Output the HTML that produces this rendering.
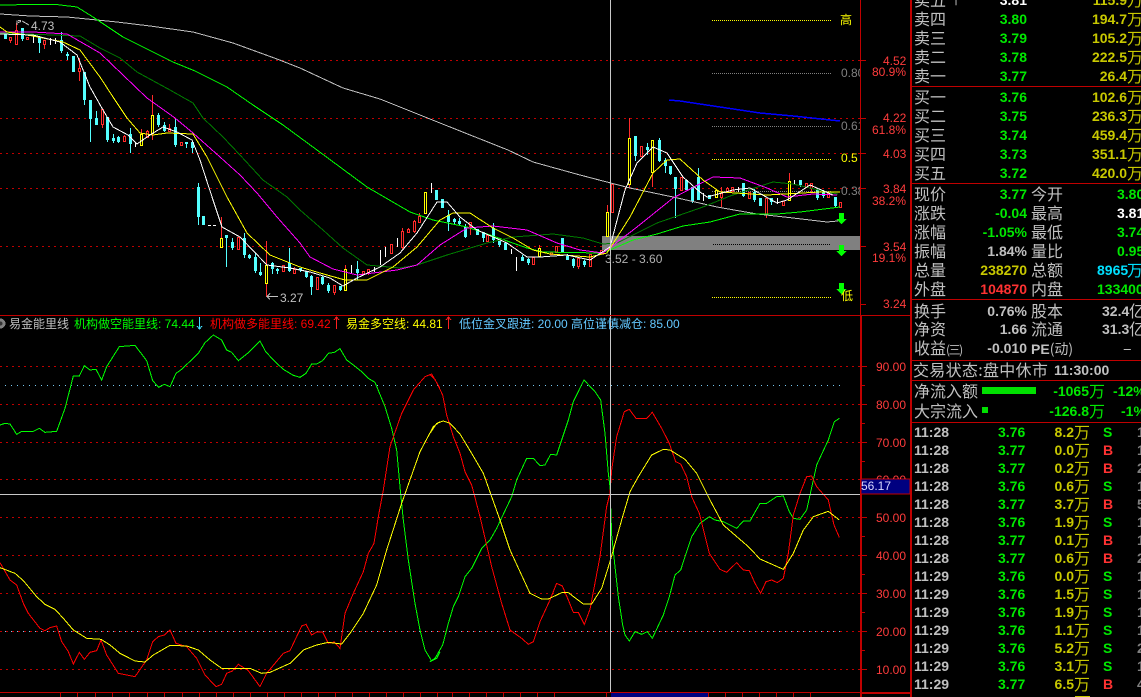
<!DOCTYPE html>
<html lang="zh"><head><meta charset="utf-8"><title>K线图</title>
<style>
html,body{margin:0;padding:0;background:#000;width:1141px;height:697px;overflow:hidden}
#r{position:relative;width:1141px;height:697px;overflow:hidden;background:#000;font-family:"Liberation Sans","WenQuanYi Zen Hei",sans-serif}
svg{position:absolute;left:0;top:0}
.t{position:absolute;white-space:pre;line-height:16px;height:16px}
.l{font:16px/16px "WenQuanYi Zen Hei","Noto Sans CJK SC",sans-serif;color:#c0c0c0;margin-top:-1px}
.n{font:bold 14px/16px "Liberation Sans",sans-serif}
.s{font:12px/14px "Liberation Sans","WenQuanYi Zen Hei",sans-serif;height:14px}
.g{color:#00e800}.y{color:#c8c800}.w{color:#c0c0c0}.r{color:#ff3232}.c{color:#00e0ff}.d{color:#808080}
</style></head><body><div id="r">
<svg width="1141" height="697" viewBox="0 0 1141 697" shape-rendering="crispEdges" fill="none">
<!-- grids -->
<g stroke="#c00000" stroke-dasharray="2 4">
<path d="M0 60.5H860M0 118.5H860M0 153.5H860M0 188.5H860M0 246.5H860"/>
<path d="M0 366.5H860M0 404.5H860M0 442.5H860M0 479.5H860M0 517.5H860M0 555.5H860M0 593.5H860M0 631.5H860M0 669.5H860"/>
</g>
<path d="M5 385.5H842M5 631.5H842" stroke="#78c8f0" stroke-dasharray="1 5"/>
<!-- band -->
<rect x="602" y="236" width="258" height="14" fill="#808080"/>
<!-- fib lines -->
<g stroke-dasharray="1 1">
<path d="M712 20.5H831M712 159.5H831M712 297.5H831" stroke="#ffff00"/>
<path d="M712 73.5H831M712 126.5H831M712 191.5H831" stroke="#808080"/>
<path d="M713 244.5H830" stroke="#000"/>
</g>
<!-- cyan candles -->
<path stroke="#54ffff" d="M5.5 33V39M22.5 28V41M39.5 36V53M61.5 32V53M67.5 52V60M84.5 72V105M90.5 100V142M96.5 111V125M107.5 117V142M113.5 134V143M118.5 136V143M130.5 128V153M158.5 113V127M164.5 122V132M175.5 118V147M186.5 142V148M192.5 142V153M198.5 183V225M226.5 235V267M232.5 238V250M244.5 233V258M249.5 254V259M255.5 253V273M260.5 263V276M272.5 262V274M277.5 268V274M289.5 248V272M300.5 268V272M306.5 271V278M311.5 275V295M322.5 276V285M328.5 283V293M340.5 286V291M357.5 261V280M448.5 210V231M454.5 218V224M459.5 218V226M465.5 224V238M483.5 232V242M493.5 223V243M499.5 241V247M522.5 255V261M528.5 258V265M562.5 238V253M567.5 254V260M573.5 258V268M584.5 260V267M635.5 136V161M647.5 143V155M659.5 138V162M665.5 158V173M670.5 166V175M675.5 177V218M692.5 187V203M698.5 168V200M743.5 183V197M754.5 189V202M771.5 198V205M800.5 180V187M817.5 188V200M823.5 190V198M835.5 197V207"/>
<path stroke="#54ffff" stroke-width="3" d="M5.5 33V39M22.5 28V39M39.5 37V43M61.5 40V51M67.5 54V56M73.5 56V72M84.5 72V100M90.5 100V119M96.5 118V125M107.5 117V140M113.5 138V141M118.5 137V142M130.5 134V144M158.5 115V125M164.5 125V131M175.5 127V145M186.5 142V144M192.5 142V148M198.5 187V217M203.5 216V225M226.5 235V238M232.5 242V248M244.5 238V255M249.5 255V258M255.5 257V271M260.5 272V275M272.5 263V269M277.5 269V271M289.5 263V271M300.5 268V270M306.5 271V277M311.5 276V287M322.5 277V284M328.5 285V291M340.5 286V290M357.5 269V273M436.5 190V200M442.5 199V208M448.5 215V222M454.5 219V222M459.5 221V224M465.5 227V237M477.5 229V235M483.5 232V238M493.5 228V240M499.5 241V245M505.5 243V250M522.5 257V261M528.5 259V263M562.5 238V252M567.5 256V260M573.5 259V266M584.5 261V265M635.5 136V156M647.5 147V150M659.5 140V161M665.5 160V166M670.5 166V174M675.5 177V189M686.5 180V190M692.5 187V201M698.5 177V200M709.5 195V199M743.5 183V196M754.5 192V200M760.5 198V206M771.5 198V202M800.5 180V185M817.5 190V198M823.5 192V196M835.5 197V206"/>
<!-- red candles -->
<path stroke="#ff2a2a" d="M10.5 37V43M16.5 23V45M27.5 37V40M44.5 40V49M79.5 58V81M102.5 109V128M124.5 135V142M147.5 130V138M169.5 124V132M141.5 129V146M152.5 95V140M221.5 217V247M266.5 241V297M345.5 265V291M238.5 237V250M283.5 265V272M294.5 267V273M317.5 277V290M334.5 285V295M363.5 271V275M368.5 269V275M402.5 228V249M408.5 228V233M414.5 220V233M419.5 213V223M470.5 222V235M487.5 235V242M539.5 245V256M578.5 258V269M590.5 254V267M607.5 205V236M629.5 118V188M652.5 140V187M721.5 187V207M727.5 187V193M766.5 198V218M789.5 173V200M811.5 183V192"/>
<path stroke="#ff2a2a" fill="#000" d="M9.5 37.5h2v3h-2zM15.5 30.5h2v14h-2zM26.5 37.5h2v2h-2zM43.5 40.5h2v4h-2zM78.5 68.5h2v3h-2zM101.5 109.5h2v15h-2zM123.5 136.5h2v5h-2zM146.5 131.5h2v6h-2zM168.5 128.5h2v3h-2zM180.5 142.5h2v3h-2zM237.5 237.5h2v12h-2zM282.5 265.5h2v6h-2zM293.5 269.5h2v4h-2zM316.5 277.5h2v12h-2zM333.5 285.5h2v7h-2zM362.5 271.5h2v3h-2zM367.5 269.5h2v4h-2zM390.5 244.5h2v9h-2zM401.5 231.5h2v16h-2zM407.5 229.5h2v3h-2zM413.5 221.5h2v10h-2zM418.5 216.5h2v6h-2zM469.5 222.5h2v4h-2zM486.5 235.5h2v6h-2zM532.5 257.5h2v7h-2zM550.5 252.5h2v2h-2zM555.5 246.5h2v6h-2zM577.5 258.5h2v8h-2zM589.5 254.5h2v12h-2zM600.5 250.5h2v3h-2zM611.5 184.5h2v28h-2zM640.5 146.5h2v10h-2zM680.5 177.5h2v13h-2zM720.5 193.5h2v4h-2zM726.5 188.5h2v4h-2zM731.5 187.5h2v4h-2zM748.5 192.5h2v6h-2zM765.5 198.5h2v16h-2zM782.5 201.5h2v4h-2zM805.5 183.5h2v4h-2zM810.5 183.5h2v5h-2zM827.5 193.5h2v4h-2zM839.5 202.5h2v5h-2z"/>
<!-- yellow candles -->
<path stroke="#ffff00" fill="#000" d="M140.5 134.5h2v11h-2zM151.5 115.5h2v18h-2zM220.5 238.5h2v9h-2zM265.5 265.5h2v18h-2zM344.5 269.5h2v21h-2zM424.5 192.5h2v21h-2zM538.5 248.5h2v8h-2zM606.5 212.5h2v24h-2zM628.5 138.5h2v46h-2zM651.5 140.5h2v32h-2zM715.5 190.5h2v7h-2zM788.5 181.5h2v19h-2z"/>
<!-- white ticks -->
<path stroke="#fff" d="M33.5 36V43M50.5 38V45M55.5 38V44M135.5 142V147M208 225.5h3M213 225.5h3M351.5 265V273M374.5 267V272M380.5 250V265M385.5 247V257M397.5 238V247M431.5 183V193M511.5 249V254M516.5 257V271M703.5 193V201M738.5 187V192M777.5 198V204M794.5 180V185"/>
<!-- moving averages -->
<polyline stroke="#c0c0c0" points="0,14 30,16 67,17 117,22 150,26 193,32 233,43 277,59 300,68 343,88 380,99 445,125 508,150 533,162 580,175 603,181 630,188 673,197 717,207 757,214 793,218 827,222 838,221"/>
<polyline stroke="#00ff00" points="0,5 20,4.7 58,4.7 77,7 93,17 123,37 147,49 173,62 195,71 227,87 253,105 283,125 317,150 367,187 410,212 433,220 467,227 490,235 527,248 543,252 600,253 610,250 633,240 657,234 683,226 710,222 740,214 777,214 800,212 840,207"/>
<polyline stroke="#007a00" points="0,33 80,36 100,48 120,58 137,72 170,90 193,103 203,118 223,137 240,155 263,180 287,197 300,210 323,230 343,248 367,265 400,268 417,265 447,255 487,243 513,237 553,234 583,238 603,244 617,243 657,223 703,207 730,196 773,182 793,184 827,192 838,194"/>
<polyline stroke="#ff00ff" points="0,32 33,32 67,34 100,53 123,75 147,98 175,118 193,133 220,157 240,175 257,193 277,217 300,243 310,257 333,269 357,275 397,270 417,265 440,245 467,228 493,226 527,230 557,243 580,250 603,253 637,227 673,198 713,177 740,178 767,188 787,197 813,194 837,195"/>
<polyline stroke="#ffff00" points="0,27 7,32 33,36 63,42 80,50 100,77 113,97 127,118 140,133 153,135 167,133 193,134 207,157 227,197 247,233 270,255 300,267 320,273 345,280 367,280 393,267 417,247 440,220 453,213 470,213 493,228 513,238 533,250 550,254 590,257 607,253 630,217 653,173 667,160 680,159 703,180 720,192 767,195 820,192 840,192"/>
<polyline stroke="#fff" points="0,34 33,35 60,42 77,55 90,87 103,110 113,127 128,135 137,144 150,135 163,127 177,132 192,140 200,160 213,200 222,227 240,237 267,265 290,268 310,272 330,278 343,286 357,278 380,267 400,253 417,233 437,202 447,202 460,217 477,230 507,243 527,257 540,257 567,255 590,260 610,247 625,190 637,163 653,147 667,153 683,177 700,192 707,197 733,190 750,188 777,203 787,200 810,185 833,195"/>
<polyline stroke="#0000ff" stroke-width="1.5" points="669,100 680,101 760,113 793,116 840,121"/>
<!-- arrows -->
<path fill="#00ff00" d="M839 213h5v6h3l-5.500 5-5.500-5h3zM839 245h5v6h3l-5.500 5-5.500-5h3zM839 283h5v6h3l-5.500 5-5.500-5h3z"/>
<path stroke="#c0c0c0" d="M17 20.5V25M18 20.5h3M18 22.5l3-1M22 21l7 4"/>
<path stroke="#c0c0c0" d="M266.5 296.5H278M267 296.5l3-3M267 296.5l3 3"/>
<!-- lower indicators -->
<g transform="translate(0,340) scale(.33333)" stroke-width="3">
<polyline stroke="#00ff00" points="0,255 15,250 30,252 50,283 65,274 100,274 118,265 135,277 170,274 195,205 220,108 238,108 253,77 270,90 288,88 305,120 320,80 358,20 405,16 440,62 458,122 476,142 493,133 510,140 528,100 545,88 595,40 615,8 640,-15 665,0 680,30 695,37 715,62 745,38 780,3 797,35 825,65 850,88 880,106 900,112 918,100 935,72 950,72 968,62 985,40 1003,37 1020,26 1040,60 1060,75 1085,95 1105,115 1125,127 1155,200 1175,265 1190,330 1200,440 1210,540 1225,660 1245,790 1260,870 1275,930 1295,963 1310,955 1320,935"/>
<polyline stroke="#ff0000" points="0,668 30,720 50,735 70,790 85,820 120,865 135,872 150,863 170,858 185,905 205,935 220,972 238,937 253,958 270,937 290,932 303,900 320,945 355,1000 405,1010 440,960 458,905 475,890 493,885 510,870 528,910 560,920 590,955 615,1005 648,1040 665,1033 680,1000 697,993 715,973 745,992 780,1040 800,1000 850,940 870,932 905,858 918,853 935,885 950,876 968,876 985,910 1003,906 1020,925 1035,820 1060,760 1090,695 1105,640 1122,610 1135,530 1150,450 1170,320 1205,220 1240,150 1275,110 1295,102 1320,145"/>
<polyline stroke="#ffff00" points="0,683 45,700 70,722 110,770 135,793 165,808 190,835 220,870 260,895 303,898 330,915 360,940 405,963 435,966 460,945 510,916 560,918 595,930 630,960 665,985 700,985 750,985 785,1000 810,997 870,970 910,930 950,915 985,907 1025,912 1050,880 1090,820 1130,735 1160,630 1205,490 1260,335 1300,260 1320,245"/>
</g>
<g transform="translate(430,340) scale(.33333)" stroke-width="3">
<polyline stroke="#00ff00" points="0,965 15,955 38,915 55,850 70,800 85,770 105,710 125,685 155,625 180,600 200,565 245,470 260,420 290,355 310,355 330,377 345,375 362,343 380,345 415,240 430,185 462,120 495,155 512,180 525,280 535,400 540,440 545,585 555,680 565,770 578,855 585,885 598,903 615,875 635,883 652,875 667,895 700,825 718,770 735,705 752,690 785,590 810,550 838,530 855,540 880,545 920,565 940,543 960,543 990,490 1010,490 1040,470 1060,468 1078,515 1090,535 1110,538 1130,510 1160,375 1195,300 1213,245 1228,235"/>
<polyline stroke="#ff0000" points="0,103 15,118 38,165 50,225 70,290 90,340 105,395 125,435 150,530 185,680 215,790 240,870 275,895 295,913 310,905 330,845 360,780 380,730 397,738 415,780 430,817 445,817 463,853 480,808 510,650 530,500 540,460 545,390 560,290 583,215 598,208 618,235 650,235 667,217 695,265 718,310 737,365 752,372 770,410 785,470 808,520 838,640 870,688 890,697 920,668 940,690 958,692 975,730 992,760 1008,725 1025,720 1042,728 1060,715 1075,640 1090,525 1110,460 1130,410 1145,408 1160,440 1195,480 1212,555 1228,592"/>
<polyline stroke="#ffff00" points="0,280 20,250 40,243 60,250 90,282 125,340 160,400 185,470 210,540 240,630 270,695 300,760 335,777 355,777 395,758 415,758 460,792 485,792 515,745 540,665 575,540 600,455 625,410 665,345 700,328 720,330 765,358 800,400 840,480 880,555 955,620 990,657 1060,688 1090,640 1120,570 1150,530 1195,514 1228,540"/>
</g>
<!-- crosshair -->
<path stroke="#c8c8c8" d="M610.5 0V693M0 494.5H860"/>
<!-- frame -->
<path stroke="#c00000" d="M860.5 0V316M0 315.5H911M860 60.5h6M860 118.5h6M860 153.5h6M860 188.5h6M860 246.5h6M860 304.5h6M0 692.5H860M60.5 693v4M77.5 693v4M95.5 693v4M112.5 693v4M129.5 693v4M147.5 693v4M164.5 693v4M182.5 693v4M199.5 693v4M216.5 693v4M233.5 693v4M250.5 693v4M267.5 693v4M284.5 693v4M301.5 693v4M318.5 693v4M335.5 693v4M352.5 693v4M369.5 693v4M386.5 693v4M403.5 693v4M420.5 693v4M437.5 693v4M452.5 693v4M469.5 693v4M486.5 693v4M503.5 693v4M520.5 693v4M537.5 693v4M554.5 693v4M606.5 693v4M708.5 693v4M725.5 693v4M742.5 693v4M759.5 693v4M776.5 693v4M793.5 693v4M810.5 693v4"/>
<path stroke="#c00000" d="M862 366.5h5M862 404.5h5M862 442.5h5M862 517.5h5M862 555.5h5M862 593.5h5M862 631.5h5M862 669.5h5M862 385.5h3M862 423.5h3M862 461.5h3M862 536.5h3M862 574.5h3M862 612.5h3M862 650.5h3"/>
<rect x="860" y="316" width="2" height="381" fill="#c00000"/>
<rect x="860" y="692" width="51" height="2" fill="#c00000"/>
<rect x="611" y="693" width="97" height="4" fill="#000080"/>
<rect x="861" y="479" width="49" height="15" fill="#000080" stroke="#c00000" stroke-width="1"/>
<rect x="910" y="0" width="2" height="697" fill="#c00000"/>
<path stroke="#c00000" d="M911 86.5H1141M911 183.5H1141M911 299.5H1141M911 360.5H1141M911 380.5H1141M911 422.5H1141"/>
<rect x="982" y="387" width="54" height="7" fill="#00e000"/>
<rect x="982" y="407" width="6" height="6" fill="#00e000"/>
<rect x="1075" y="696" width="15" height="1" fill="#c8c800"/>
<circle cx="0.5" cy="323.5" r="5" fill="#808080"/>
<circle cx="0.5" cy="323.5" r="2" fill="#333"/>
<path stroke="#40e0ff" d="M199.5 317V329M197 326l2.500 3 2.500-3"/>
<path stroke="#ff2020" d="M336.500 317V329M334 320l2.500-3 2.500 3M448.500 317V329M446 320l2.500-3 2.500 3"/>
</svg>

<span class="t s w" style="left:31px;top:19px">4.73</span>
<span class="t s w" style="left:280px;top:291px">3.27</span>
<span class="t s w" style="left:605px;top:252px;color:#b0b0b0">3.52 - 3.60</span>
<span class="t s" style="left:840px;top:13px;color:#ffff00">高</span>
<span class="t s" style="left:841px;top:289px;color:#ffff00">低</span>
<span class="t s d" style="left:841px;top:66px;width:19px;overflow:hidden">0.80</span>
<span class="t s d" style="left:841px;top:119px;width:19px;overflow:hidden">0.61</span>
<span class="t s" style="left:841px;top:151px;color:#ffff00">0.5</span>
<span class="t s d" style="left:841px;top:184px;width:19px;overflow:hidden">0.38</span>

<span class="t s" style="left:883px;top:54px;color:#ff3c3c">4.52</span>
<span class="t s" style="left:872px;top:65px;color:#ff3c3c">80.9%</span>
<span class="t s" style="left:883px;top:111px;color:#ff3c3c">4.22</span>
<span class="t s" style="left:872px;top:123px;color:#ff3c3c">61.8%</span>
<span class="t s" style="left:883px;top:147px;color:#ff3c3c">4.03</span>
<span class="t s" style="left:883px;top:182px;color:#ff3c3c">3.84</span>
<span class="t s" style="left:872px;top:194px;color:#ff3c3c">38.2%</span>
<span class="t s" style="left:883px;top:240px;color:#ff3c3c">3.54</span>
<span class="t s" style="left:872px;top:251px;color:#ff3c3c">19.1%</span>
<span class="t s" style="left:883px;top:297px;color:#ff3c3c">3.24</span>

<span class="t s w" style="left:9px;top:317px">易金能里线</span>
<span class="t s" style="left:74px;top:317px;color:#00ff00">机构做空能里线: 74.44</span>
<span class="t s" style="left:210px;top:317px;color:#ff0000">机构做多能里线: 69.42</span>
<span class="t s" style="left:346px;top:317px;color:#ffff00">易金多空线: 44.81</span>
<span class="t s" style="left:459px;top:317px;color:#64c8ff">低位金叉跟进: 20.00</span>
<span class="t s" style="left:571px;top:317px;color:#64c8ff">高位谨慎减仓: 85.00</span>

<span class="t s" style="left:876px;top:360px;color:#ff3c3c">90.00</span>
<span class="t s" style="left:876px;top:398px;color:#ff3c3c">80.00</span>
<span class="t s" style="left:876px;top:436px;color:#ff3c3c">70.00</span>
<span class="t s" style="left:876px;top:473px;height:6px;overflow:hidden;color:#ff3c3c">60.00</span>
<span class="t s" style="left:861px;top:479px;color:#d8d8ff">56.17</span>
<span class="t s" style="left:876px;top:511px;color:#ff3c3c">50.00</span>
<span class="t s" style="left:876px;top:549px;color:#ff3c3c">40.00</span>
<span class="t s" style="left:876px;top:587px;color:#ff3c3c">30.00</span>
<span class="t s" style="left:876px;top:625px;color:#ff3c3c">20.00</span>
<span class="t s" style="left:876px;top:663px;color:#ff3c3c">10.00</span>

<span class="t l" style="left:914px;top:-8px">卖五</span><span class="t s w" style="left:950px;top:-7px">十</span><span class="t n" style="right:114px;top:-8px;color:#fff">3.81</span><span class="t n y" style="right:14px;top:-8px">115.9</span><span class="t l y" style="left:1127px;top:-8px">万</span>
<span class="t l" style="left:914px;top:11px">卖四</span><span class="t n g" style="right:114px;top:11px">3.80</span><span class="t n y" style="right:14px;top:11px">194.7</span><span class="t l y" style="left:1127px;top:11px">万</span>
<span class="t l" style="left:914px;top:30px">卖三</span><span class="t n g" style="right:114px;top:30px">3.79</span><span class="t n y" style="right:14px;top:30px">105.2</span><span class="t l y" style="left:1127px;top:30px">万</span>
<span class="t l" style="left:914px;top:49px">卖二</span><span class="t n g" style="right:114px;top:49px">3.78</span><span class="t n y" style="right:14px;top:49px">222.5</span><span class="t l y" style="left:1127px;top:49px">万</span>
<span class="t l" style="left:914px;top:68px">卖一</span><span class="t n g" style="right:114px;top:68px">3.77</span><span class="t n y" style="right:14px;top:68px">26.4</span><span class="t l y" style="left:1127px;top:68px">万</span>
<span class="t l" style="left:914px;top:89px">买一</span><span class="t n g" style="right:114px;top:89px">3.76</span><span class="t n y" style="right:14px;top:89px">102.6</span><span class="t l y" style="left:1127px;top:89px">万</span>
<span class="t l" style="left:914px;top:108px">买二</span><span class="t n g" style="right:114px;top:108px">3.75</span><span class="t n y" style="right:14px;top:108px">236.3</span><span class="t l y" style="left:1127px;top:108px">万</span>
<span class="t l" style="left:914px;top:127px">买三</span><span class="t n g" style="right:114px;top:127px">3.74</span><span class="t n y" style="right:14px;top:127px">459.4</span><span class="t l y" style="left:1127px;top:127px">万</span>
<span class="t l" style="left:914px;top:146px">买四</span><span class="t n g" style="right:114px;top:146px">3.73</span><span class="t n y" style="right:14px;top:146px">351.1</span><span class="t l y" style="left:1127px;top:146px">万</span>
<span class="t l" style="left:914px;top:165px">买五</span><span class="t n g" style="right:114px;top:165px">3.72</span><span class="t n y" style="right:14px;top:165px">420.0</span><span class="t l y" style="left:1127px;top:165px">万</span>

<span class="t l" style="left:914px;top:186px">现价</span><span class="t n g" style="right:114px;top:186px">3.77</span><span class="t l" style="left:1031px;top:186px">今开</span><span class="t n g" style="left:1117px;top:186px">3.80</span>
<span class="t l" style="left:914px;top:205px">涨跌</span><span class="t n g" style="right:114px;top:205px">-0.04</span><span class="t l" style="left:1031px;top:205px">最高</span><span class="t n" style="left:1117px;top:205px;color:#fff">3.81</span>
<span class="t l" style="left:914px;top:224px">涨幅</span><span class="t n g" style="right:114px;top:224px">-1.05%</span><span class="t l" style="left:1031px;top:224px">最低</span><span class="t n g" style="left:1117px;top:224px">3.74</span>
<span class="t l" style="left:914px;top:243px">振幅</span><span class="t n w" style="right:114px;top:243px">1.84%</span><span class="t l" style="left:1031px;top:243px">量比</span><span class="t n g" style="left:1117px;top:243px">0.95</span>
<span class="t l" style="left:914px;top:262px">总量</span><span class="t n y" style="right:114px;top:262px">238270</span><span class="t l" style="left:1031px;top:262px">总额</span><span class="t n c" style="left:1097px;top:262px">8965</span><span class="t l c" style="left:1127px;top:262px">万</span>
<span class="t l" style="left:914px;top:281px">外盘</span><span class="t n r" style="right:114px;top:281px">104870</span><span class="t l" style="left:1031px;top:281px">内盘</span><span class="t n g" style="left:1097px;top:281px">133400</span>

<span class="t l" style="left:914px;top:303px">换手</span><span class="t n w" style="right:114px;top:303px">0.76%</span><span class="t l" style="left:1031px;top:303px">股本</span><span class="t n w" style="left:1102px;top:303px">32.4</span><span class="t l" style="left:1129px;top:303px">亿</span>
<span class="t l" style="left:914px;top:321px">净资</span><span class="t n w" style="right:114px;top:321px">1.66</span><span class="t l" style="left:1031px;top:321px">流通</span><span class="t n w" style="left:1102px;top:321px">31.3</span><span class="t l" style="left:1129px;top:321px">亿</span>
<span class="t l" style="left:914px;top:340px">收益<span style="font-size:12px;letter-spacing:-1.500px">(三)</span></span><span class="t n w" style="right:114px;top:340px">-0.010</span><span class="t l" style="left:1031px;top:340px"><b style="font:bold 14px 'Liberation Sans'">PE</b><span style="font-size:14px">(动)</span></span><span class="t l" style="left:1123px;top:340px">–</span>

<span class="t l" style="left:913px;top:362px;letter-spacing:.3px">交易状态:盘中休市</span><span class="t n w" style="left:1054px;top:362px">11:30:00</span>
<span class="t l" style="left:914px;top:383px">净流入额</span><span class="t n g" style="right:52px;top:383px">-1065</span><span class="t l g" style="left:1089px;top:383px">万</span><span class="t n g" style="left:1113px;top:383px">-12%</span>
<span class="t l" style="left:914px;top:403px">大宗流入</span><span class="t n g" style="right:52px;top:403px">-126.8</span><span class="t l g" style="left:1089px;top:403px">万</span><span class="t n g" style="left:1121px;top:403px">-1%</span>

<span class="t n w" style="left:914px;top:424px">11:28</span><span class="t n g" style="left:998px;top:424px">3.76</span><span class="t n y" style="right:67px;top:424px">8.2</span><span class="t l y" style="left:1074px;top:424px">万</span><span class="t n g" style="left:1103px;top:424px">S</span><span class="t n d" style="left:1137px;top:424px">1</span>
<span class="t n w" style="left:914px;top:442px">11:28</span><span class="t n g" style="left:998px;top:442px">3.77</span><span class="t n y" style="right:67px;top:442px">0.0</span><span class="t l y" style="left:1074px;top:442px">万</span><span class="t n r" style="left:1103px;top:442px">B</span><span class="t n d" style="left:1137px;top:442px">1</span>
<span class="t n w" style="left:914px;top:460px">11:28</span><span class="t n g" style="left:998px;top:460px">3.77</span><span class="t n y" style="right:67px;top:460px">0.2</span><span class="t l y" style="left:1074px;top:460px">万</span><span class="t n r" style="left:1103px;top:460px">B</span><span class="t n d" style="left:1137px;top:460px">2</span>
<span class="t n w" style="left:914px;top:478px">11:28</span><span class="t n g" style="left:998px;top:478px">3.76</span><span class="t n y" style="right:67px;top:478px">0.6</span><span class="t l y" style="left:1074px;top:478px">万</span><span class="t n g" style="left:1103px;top:478px">S</span><span class="t n d" style="left:1137px;top:478px">1</span>
<span class="t n w" style="left:914px;top:496px">11:28</span><span class="t n g" style="left:998px;top:496px">3.77</span><span class="t n y" style="right:67px;top:496px">3.7</span><span class="t l y" style="left:1074px;top:496px">万</span><span class="t n r" style="left:1103px;top:496px">B</span><span class="t n d" style="left:1137px;top:496px">5</span>
<span class="t n w" style="left:914px;top:514px">11:28</span><span class="t n g" style="left:998px;top:514px">3.76</span><span class="t n y" style="right:67px;top:514px">1.9</span><span class="t l y" style="left:1074px;top:514px">万</span><span class="t n g" style="left:1103px;top:514px">S</span><span class="t n d" style="left:1137px;top:514px">1</span>
<span class="t n w" style="left:914px;top:532px">11:28</span><span class="t n g" style="left:998px;top:532px">3.77</span><span class="t n y" style="right:67px;top:532px">0.1</span><span class="t l y" style="left:1074px;top:532px">万</span><span class="t n r" style="left:1103px;top:532px">B</span><span class="t n d" style="left:1137px;top:532px">1</span>
<span class="t n w" style="left:914px;top:550px">11:28</span><span class="t n g" style="left:998px;top:550px">3.77</span><span class="t n y" style="right:67px;top:550px">0.6</span><span class="t l y" style="left:1074px;top:550px">万</span><span class="t n r" style="left:1103px;top:550px">B</span><span class="t n d" style="left:1137px;top:550px">2</span>
<span class="t n w" style="left:914px;top:568px">11:29</span><span class="t n g" style="left:998px;top:568px">3.76</span><span class="t n y" style="right:67px;top:568px">0.0</span><span class="t l y" style="left:1074px;top:568px">万</span><span class="t n g" style="left:1103px;top:568px">S</span><span class="t n d" style="left:1137px;top:568px">1</span>
<span class="t n w" style="left:914px;top:586px">11:29</span><span class="t n g" style="left:998px;top:586px">3.76</span><span class="t n y" style="right:67px;top:586px">1.5</span><span class="t l y" style="left:1074px;top:586px">万</span><span class="t n g" style="left:1103px;top:586px">S</span><span class="t n d" style="left:1137px;top:586px">1</span>
<span class="t n w" style="left:914px;top:604px">11:29</span><span class="t n g" style="left:998px;top:604px">3.76</span><span class="t n y" style="right:67px;top:604px">1.9</span><span class="t l y" style="left:1074px;top:604px">万</span><span class="t n g" style="left:1103px;top:604px">S</span><span class="t n d" style="left:1137px;top:604px">1</span>
<span class="t n w" style="left:914px;top:622px">11:29</span><span class="t n g" style="left:998px;top:622px">3.76</span><span class="t n y" style="right:67px;top:622px">1.1</span><span class="t l y" style="left:1074px;top:622px">万</span><span class="t n g" style="left:1103px;top:622px">S</span><span class="t n d" style="left:1137px;top:622px">1</span>
<span class="t n w" style="left:914px;top:640px">11:29</span><span class="t n g" style="left:998px;top:640px">3.76</span><span class="t n y" style="right:67px;top:640px">5.2</span><span class="t l y" style="left:1074px;top:640px">万</span><span class="t n g" style="left:1103px;top:640px">S</span><span class="t n d" style="left:1137px;top:640px">2</span>
<span class="t n w" style="left:914px;top:658px">11:29</span><span class="t n g" style="left:998px;top:658px">3.76</span><span class="t n y" style="right:67px;top:658px">3.1</span><span class="t l y" style="left:1074px;top:658px">万</span><span class="t n g" style="left:1103px;top:658px">S</span><span class="t n d" style="left:1137px;top:658px">1</span>
<span class="t n w" style="left:914px;top:676px">11:29</span><span class="t n g" style="left:998px;top:676px">3.77</span><span class="t n y" style="right:67px;top:676px">6.5</span><span class="t l y" style="left:1074px;top:676px">万</span><span class="t n r" style="left:1103px;top:676px">B</span><span class="t n d" style="left:1137px;top:676px">4</span>
</div></body></html>
